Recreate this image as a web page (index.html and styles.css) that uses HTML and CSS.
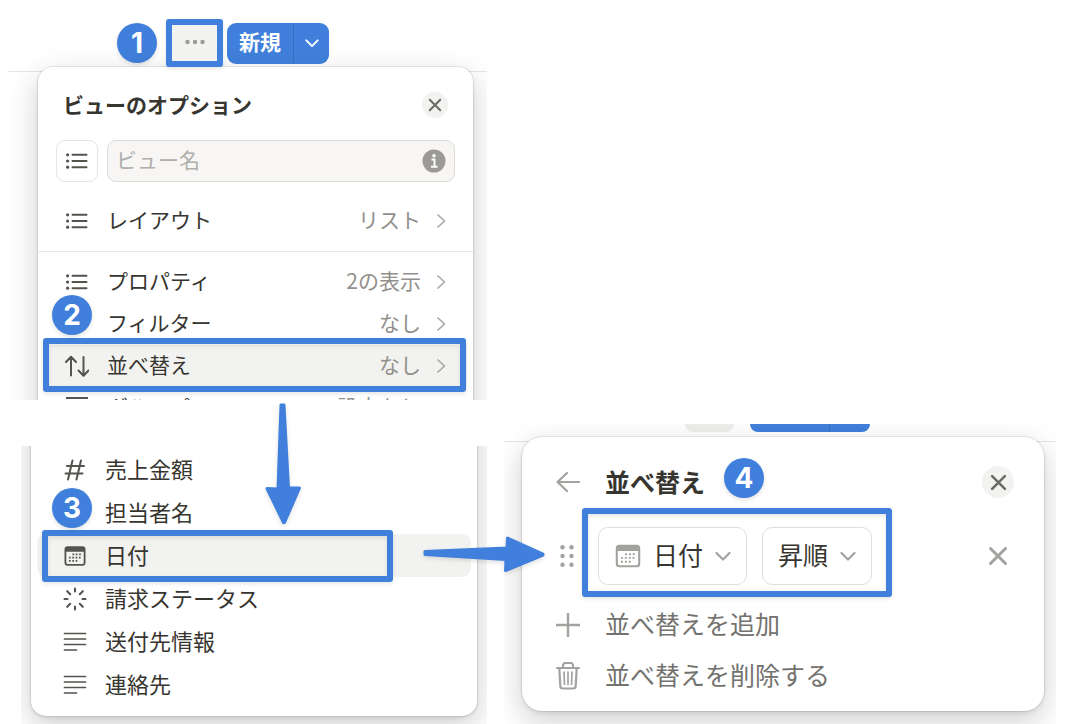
FILE: index.html
```html
<!DOCTYPE html>
<html lang="ja">

<head>
    <meta charset="UTF-8">
    <meta name="viewport" content="width=device-width, initial-scale=1">
    <title>並べ替えの設定手順</title>
    <link rel="stylesheet" href="styles.css">
</head>

<body>
    <!-- 共通アイコン -->
    <svg class="defs" aria-hidden="true">
        <symbol id="list" viewBox="0 0 24 24">
            <path d="M7.5 5.8h14M7.5 12h14M7.5 18.2h14" fill="none" stroke="currentColor" stroke-width="2" stroke-linecap="round" />
            <circle cx="2.6" cy="5.8" r="1.6" />
            <circle cx="2.6" cy="12" r="1.6" />
            <circle cx="2.6" cy="18.2" r="1.6" />
        </symbol>
        <symbol id="lines" viewBox="0 0 24 24">
            <path d="M1.5 3.5h21M1.500 9h21M1.500 14.500h21M1.500 20h12" fill="none" stroke="currentColor" stroke-width="1.700" stroke-linecap="round" />
        </symbol>
        <symbol id="calendar" viewBox="0 0 24 24">
            <path fill-rule="evenodd" d="M4.500 2.300h15a3 3 0 0 1 3 3v13.400a3 3 0 0 1-3 3h-15a3 3 0 0 1-3-3V5.300a3 3 0 0 1 3-3zM3.300 7.700v10.700a1.500 1.500 0 0 0 1.500 1.500h14.400a1.500 1.500 0 0 0 1.500-1.500V7.700z" />
            <path d="M9.500 10.400h9M6 13.600h12.500M6 16.900h9" fill="none" stroke="currentColor" stroke-width="1.700" stroke-dasharray="1.700 1.600" />
        </symbol>
        <symbol id="cross" viewBox="0 0 16 16">
            <path d="M2 2l12 12M14 2L2 14" fill="none" stroke="currentColor" stroke-width="2.400" stroke-linecap="round" />
        </symbol>
        <symbol id="right" viewBox="0 0 10 16">
            <path d="M2 2l6.500 6L2 14" fill="none" stroke="currentColor" stroke-width="1.700" stroke-linecap="round" stroke-linejoin="round" />
        </symbol>
        <symbol id="down" viewBox="0 0 16 16">
            <path d="M1.500 5L8 11.500 14.500 5" fill="none" stroke="currentColor" stroke-width="2.200" stroke-linecap="round" stroke-linejoin="round" />
        </symbol>
    </svg>

    <main class="guide">
        <div class="column">
            <!-- ビューのオプション -->
            <section class="step">
                <div class="shot">
                    <div class="toolbar">
                        <span class="num">1</span>
                        <div class="more_wrap">
                            <button type="button" class="more" aria-label="その他">
                                <svg width="20" height="6" viewBox="0 0 20 6"><circle cx="2.500" cy="3" r="2.200" /><circle cx="10" cy="3" r="2.200" /><circle cx="17.500" cy="3" r="2.200" /></svg>
                            </button>
                        </div>
                        <div class="new">
                            <button type="button" class="new_main">新規</button>
                            <button type="button" class="new_menu" aria-label="メニュー"><svg width="14" height="14"><use href="#down" /></svg></button>
                        </div>
                    </div>
                    <div class="panel panel_view">
                        <div class="head">
                            <h2>ビューのオプション</h2>
                            <button type="button" class="close" aria-label="閉じる"><svg width="14" height="14"><use href="#cross" /></svg></button>
                        </div>
                        <div class="name">
                            <button type="button" class="name_icon" aria-label="アイコン"><svg width="24" height="24"><use href="#list" /></svg></button>
                            <div class="field">
                                <input type="text" placeholder="ビュー名" aria-label="ビュー名">
                                <svg class="info" width="24" height="24" viewBox="0 0 24 24" aria-hidden="true">
                                    <circle cx="12" cy="12" r="11.500" />
                                    <circle cx="12" cy="6.700" r="1.700" fill="#fff" />
                                    <path d="M9.500 10.500h3v7M9 17.700h6.500" fill="none" stroke="#fff" stroke-width="1.900" />
                                </svg>
                            </div>
                        </div>
                        <div class="menu">
                            <button type="button" class="row">
                                <svg width="24" height="24"><use href="#list" /></svg>
                                <span class="label">レイアウト</span><span class="value">リスト</span>
                                <svg class="arrow" width="10" height="16"><use href="#right" /></svg>
                            </button>
                        </div>
                        <div class="menu menu_line">
                            <button type="button" class="row">
                                <svg width="24" height="24"><use href="#list" /></svg>
                                <span class="label">プロパティ</span><span class="value">2の表示</span>
                                <svg class="arrow" width="10" height="16"><use href="#right" /></svg>
                            </button>
                            <button type="button" class="row">
                                <svg width="24" height="24"></svg>
                                <span class="label">フィルター</span><span class="value">なし</span>
                                <svg class="arrow" width="10" height="16"><use href="#right" /></svg>
                                <span class="num num_2">2</span>
                            </button>
                            <button type="button" class="row active">
                                <svg width="24" height="24" viewBox="0 0 24 24">
                                    <path d="M6 21.500V3M1 8l5-5.200L11 8M18.500 3v18.500M13.500 16.500l5 5.200 5-5.200" fill="none" stroke="currentColor" stroke-width="2" stroke-linecap="round" stroke-linejoin="round" />
                                </svg>
                                <span class="label">並べ替え</span><span class="value">なし</span>
                                <svg class="arrow" width="10" height="16"><use href="#right" /></svg>
                                <i class="mark mark_sort"></i>
                            </button>
                            <button type="button" class="row">
                                <svg width="24" height="24" viewBox="0 0 24 24"><path d="M1 2h22M1 12h22" stroke="currentColor" stroke-width="2" /></svg>
                                <span class="label">グループ</span><span class="value">設定なし</span>
                                <svg class="arrow" width="10" height="16"></svg>
                            </button>
                        </div>
                    </div>
                </div>
                <svg class="flow flow_down" width="40" height="124" viewBox="0 0 40 124" aria-hidden="true">
                    <path d="M17 3h3l4.500 83h11L20.500 120.500h-1L3 86.500l11 .500z" />
                </svg>
            </section>

            <!-- プロパティの選択 -->
            <section class="step step_props">
                <div class="shot">
                    <div class="panel panel_props">
                        <button type="button" class="row">
                            <svg width="24" height="24" viewBox="0 0 24 24"><path d="M9.500 2.500l-4.500 19M18 2.500l-4.500 19M4 8h17M2.500 15.500h17" fill="none" stroke="currentColor" stroke-width="2" stroke-linecap="round" /></svg>
                            <span class="label">売上金額</span>
                        </button>
                        <button type="button" class="row">
                            <svg width="24" height="24"></svg>
                            <span class="label">担当者名</span>
                            <span class="num num_3">3</span>
                        </button>
                        <button type="button" class="row active">
                            <svg width="24" height="24"><use href="#calendar" /></svg>
                            <span class="label">日付</span>
                            <i class="mark mark_date"></i>
                        </button>
                        <button type="button" class="row">
                            <svg width="24" height="24" viewBox="0 0 24 24"><path d="M12 1.500v3M12 19.500v3M1.500 12h3M19.500 12h3M4.200 4.200l3 3M16.800 16.800l3 3M4.200 19.800l3-3M16.800 7.200l3-3" fill="none" stroke="currentColor" stroke-width="2.100" stroke-linecap="round" /></svg>
                            <span class="label">請求ステータス</span>
                        </button>
                        <button type="button" class="row">
                            <svg width="24" height="24"><use href="#lines" /></svg>
                            <span class="label">送付先情報</span>
                        </button>
                        <button type="button" class="row">
                            <svg width="24" height="24"><use href="#lines" /></svg>
                            <span class="label">連絡先</span>
                        </button>
                    </div>
                </div>
            </section>
        </div>

        <!-- 並べ替え -->
        <section class="step step_sort">
            <div class="shot">
                <div class="tabs">
                    <div class="tab_gray"></div>
                    <div class="tab_blue"></div>
                </div>
                <div class="panel panel_sort">
                    <div class="head">
                        <button type="button" class="back" aria-label="戻る">
                            <svg width="24" height="24" viewBox="0 0 24 24"><path d="M23 12H2M11 3l-9.500 9 9.500 9" fill="none" stroke="currentColor" stroke-width="2.200" stroke-linecap="round" stroke-linejoin="round" /></svg>
                        </button>
                        <h2>並べ替え<span class="num num_4">4</span></h2>
                        <button type="button" class="close" aria-label="閉じる"><svg width="17" height="17"><use href="#cross" /></svg></button>
                    </div>
                    <div class="rule">
                        <svg class="drag" width="24" height="24" viewBox="0 0 24 24" aria-hidden="true">
                            <circle cx="6.500" cy="3.300" r="2.200" /><circle cx="15.500" cy="3.300" r="2.200" />
                            <circle cx="6.500" cy="12" r="2.200" /><circle cx="15.500" cy="12" r="2.200" />
                            <circle cx="6.500" cy="20.700" r="2.200" /><circle cx="15.500" cy="20.700" r="2.200" />
                        </svg>
                        <div class="picks">
                            <div class="pick">
                                <svg width="28" height="28"><use href="#calendar" /></svg>
                                <select aria-label="プロパティ"><option>日付</option></select>
                                <svg width="16" height="16"><use href="#down" /></svg>
                            </div>
                            <div class="pick">
                                <select aria-label="順序"><option>昇順</option></select>
                                <svg width="16" height="16"><use href="#down" /></svg>
                            </div>
                            <i class="mark mark_rule"></i>
                        </div>
                        <button type="button" class="remove" aria-label="削除"><svg width="20" height="20"><use href="#cross" /></svg></button>
                    </div>
                    <button type="button" class="row">
                        <svg width="24" height="24" viewBox="0 0 24 24"><path d="M12 0v24M0 12h24" stroke="currentColor" stroke-width="2.400" /></svg>
                        <span class="label">並べ替えを追加</span>
                    </button>
                    <button type="button" class="row">
                        <svg width="24" height="28" viewBox="0 0 24 28">
                            <path d="M1 6h22M7 6V3.500A2.500 2.500 0 0 1 9.500 1h5A2.500 2.500 0 0 1 17 3.500V6M3.300 6l1 18a2.500 2.500 0 0 0 2.500 2.500h10.400a2.500 2.500 0 0 0 2.500-2.500l1-18" fill="none" stroke="currentColor" stroke-width="2.200" stroke-linecap="round" />
                            <path d="M8 10l.500 12.500M12 10v12.500M16 10l-.500 12.500" fill="none" stroke="currentColor" stroke-width="1.700" stroke-linecap="round" />
                        </svg>
                        <span class="label">並べ替えを削除する</span>
                    </button>
                </div>
            </div>
            <svg class="flow flow_right" width="124" height="40" viewBox="0 0 124 40" aria-hidden="true">
                <path d="M3 16.500v3L84 24.500l-.5 11L121 20v-1L85.500 3l-.500 10z" />
            </svg>
        </section>
    </main>
</body>

</html>
```
FILE: styles.css
```css
body,
h2,
button,
input,
select {
    margin: 0;
    padding: 0;
    border: 0;
}

* {
    box-sizing: border-box;
}

body {
    background: #fff;
    color: #37352f;
    font-family: "Noto Sans CJK JP", sans-serif;
    font-size: 21px;
    line-height: 30px;
}

button,
input,
select {
    font: inherit;
    color: inherit;
    background: none;
}

svg {
    display: block;
    flex: none;
    fill: currentColor;
}

.defs {
    position: absolute;
    width: 0;
    height: 0;
}

.guide {
    display: grid;
    grid-template-columns: minmax(0, 479fr) minmax(0, 552fr);
    column-gap: 17px;
    padding: 0 30px 0 8px;
}

.column {
    display: flex;
    flex-direction: column;
    gap: 46px;
}

.step {
    position: relative;
}

.step_props {
    margin-left: 13px;
}

.step_sort {
    align-self: end;
}

.shot {
    overflow: hidden;
}

.panel {
    position: relative;
    background: #fff;
    border-radius: 15px;
    box-shadow: 0 0 0 1px rgba(15, 15, 15, 0.08), 0 2px 4px rgba(15, 15, 15, 0.08), 0 10px 30px rgba(15, 15, 15, 0.2);
}

/* 番号・枠・矢印 */
.num {
    display: block;
    width: 40px;
    height: 40px;
    border-radius: 50%;
    background: #4080dc;
    color: #fff;
    font-family: Inter, sans-serif;
    font-size: 28px;
    font-weight: 700;
    line-height: 40px;
    text-align: center;
    box-shadow: 0 2px 4px rgba(0, 0, 0, 0.12);
}

.num_2,
.num_3,
.num_4 {
    position: absolute;
    z-index: 2;
}

.num_2 {
    left: 8px;
    top: -8px;
}

.num_3 {
    left: 15px;
    top: -3px;
}

.num_4 {
    left: calc(100% + 19px);
    top: -8px;
}

.mark {
    position: absolute;
    z-index: 1;
    border: 6px solid #4080dc;
    border-radius: 3px;
    box-shadow: 0 2px 4px rgba(0, 0, 0, 0.1), inset 0 2px 4px rgba(0, 0, 0, 0.1);
}

.mark_sort {
    inset: -7px 1px -5px -1px;
}

.mark_date {
    inset: -4px 78px -5px 5px;
}

.mark_rule {
    inset: -19px -20px -12px -16px;
}

.flow {
    position: absolute;
    z-index: 3;
    fill: #4080dc;
    stroke: #4080dc;
    stroke-width: 3px;
    stroke-linejoin: round;
    filter: drop-shadow(0 2px 2px rgba(0, 0, 0, 0.12));
}

.flow_down {
    left: 256px;
    top: 402px;
}

.flow_right {
    left: -82px;
    top: 111px;
}

/* ツールバー */
.toolbar {
    display: flex;
    align-items: center;
    padding: 19px 0 4px 109px;
    border-bottom: 1px solid #e6e6e5;
}

.more_wrap {
    position: relative;
    z-index: 1;
    margin: 0 4px 0 9px;
    border: 6px solid #4080dc;
    border-radius: 3px;
    box-shadow: 0 2px 4px rgba(0, 0, 0, 0.1), inset 0 1px 3px rgba(0, 0, 0, 0.1);
}

.more {
    display: flex;
    align-items: center;
    justify-content: center;
    width: 45px;
    height: 36px;
    padding-bottom: 2px;
    background: #f2f2f0;
    color: #9b9a97;
}

.new {
    display: flex;
    height: 41px;
    border-radius: 9px;
    background: #4080dc;
    color: #fff;
}

.new_main {
    width: 66px;
    padding-bottom: 4px;
    font-weight: 700;
}

.new_menu {
    display: flex;
    align-items: center;
    justify-content: center;
    width: 36px;
    border-left: 1px solid #376fc0;
}

/* パネル共通 */
.head {
    display: flex;
    align-items: center;
}

.head h2 {
    position: relative;
    padding-bottom: 2px;
    font-size: 21px;
    font-weight: 700;
    line-height: 30px;
}

.close {
    display: flex;
    align-items: center;
    justify-content: center;
    width: 26px;
    height: 26px;
    margin-left: auto;
    border-radius: 50%;
    background: #f2f2f1;
    color: #6c6b67;
}

.row {
    position: relative;
    display: flex;
    align-items: center;
    gap: 18px;
    width: 100%;
    height: 42px;
    padding: 0 21px;
    text-align: left;
}

.row > svg {
    color: #55534e;
}

.row.active {
    background: #f2f2f0;
}

.label,
.value {
    padding-bottom: 4px;
}

.value {
    margin-left: auto;
    color: #91908c;
}

.row > .arrow {
    margin-left: -3px;
    color: #a9a8a5;
}

/* ビューのオプション */
.panel_view {
    margin: -5px 14px -98px 30px;
    padding-bottom: 60px;
}

.panel_view .head {
    height: 73px;
    padding: 2px 25px 0;
}

.name {
    display: flex;
    gap: 9px;
    padding: 0 18px 9px;
}

.name_icon {
    display: flex;
    align-items: center;
    justify-content: center;
    width: 42px;
    height: 42px;
    border: 1px solid #e4e4e2;
    border-radius: 9px;
    color: #55534e;
}

.field {
    display: flex;
    flex: 1;
    align-items: center;
    min-width: 0;
    padding: 0 8px;
    border: 1px solid #dbdad7;
    border-radius: 9px;
    background: #f7f6f4;
}

.field input {
    flex: 1;
    min-width: 0;
    height: 40px;
    padding-bottom: 4px;
    outline: none;
}

.field input::placeholder {
    color: #b0afab;
    opacity: 1;
}

.info {
    color: #9b9a97;
}

.menu {
    padding: 9px 6px;
}

.menu_line {
    border-top: 1px solid #e9e9e7;
}

/* プロパティの選択 */
.panel_props {
    margin: -60px 10px 8px;
    padding: 62px 6px 10px;
    font-size: 22px;
}

.step_props .shot {
    display: flow-root;
}

.panel_props .row {
    height: 43px;
    padding: 0 26px;
    border-radius: 9px;
}

/* 並べ替え */
.tabs {
    display: flex;
    gap: 16px;
    height: 18px;
    padding-left: 181px;
    border-bottom: 1px solid #e6e6e5;
}

.tab_gray,
.tab_blue {
    height: 8px;
    border-radius: 0 0 9px 9px;
}

.tab_gray {
    width: 49px;
    background: #eeeeec;
}

.tab_blue {
    width: 120px;
    background: linear-gradient(90deg, #4080dc 79px, #376fc0 79px, #376fc0 80px, #4080dc 80px);
}

.panel_sort {
    margin: -5px 12px 13px 18px;
    padding-bottom: 10px;
    border-radius: 20px;
    font-size: 25px;
}

.panel_sort .head {
    height: 90px;
    padding: 0 30px 0 34px;
}

.panel_sort h2 {
    font-size: 25px;
}

.panel_sort .close,
.remove {
    width: 32px;
    height: 32px;
}

.back {
    margin-right: 25px;
    color: #a3a29f;
}

.rule {
    display: flex;
    align-items: center;
    gap: 18px;
    margin-bottom: 14px;
    padding: 0 30px 0 34px;
}

.drag {
    color: #a3a29f;
}

.picks {
    position: relative;
    display: flex;
    gap: 15px;
}

.picks .mark {
    pointer-events: none;
}

.pick {
    display: flex;
    align-items: center;
    gap: 11px;
    height: 58px;
    padding: 0 15px;
    border: 1px solid #dededc;
    border-radius: 10px;
}

.pick svg {
    color: #a3a29f;
}

.pick select {
    appearance: none;
    height: 44px;
    padding-bottom: 4px;
}

.remove {
    display: flex;
    align-items: center;
    justify-content: center;
    margin-left: auto;
    color: #a3a29f;
}

.panel_sort .row {
    gap: 25px;
    height: 51px;
    padding: 0 34px;
    color: #73726e;
}

.panel_sort .row > svg {
    color: #a3a29f;
}
```
